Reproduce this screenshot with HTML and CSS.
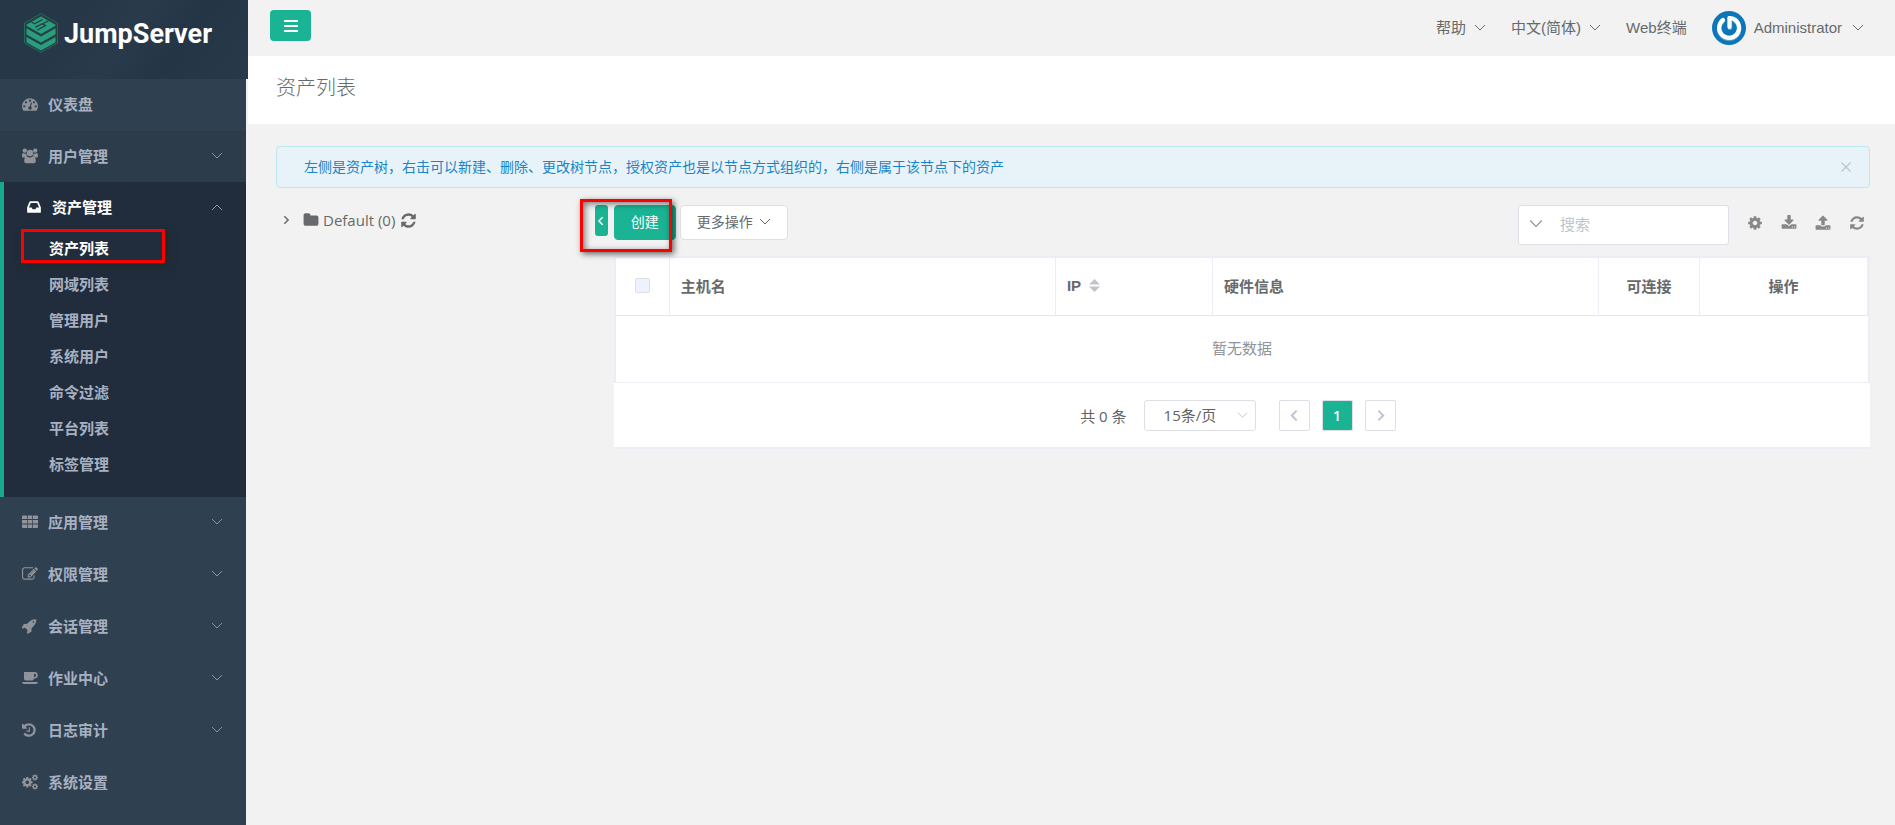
FILE: index.html
```html
<!DOCTYPE html>
<html lang="zh-CN">
<head>
<meta charset="utf-8">
<title>资产列表 - JumpServer</title>
<link rel="stylesheet" href="styles.css">
</head>
<body>
<svg class="sprite" aria-hidden="true">
  <symbol id="down" viewBox="0 0 12 12"><path d="M1 3l5 5 5-5" fill="none" stroke="currentColor"/></symbol>
  <symbol id="up" viewBox="0 0 12 12"><path d="M1 9l5-5 5 5" fill="none" stroke="currentColor"/></symbol>
  <symbol id="left" viewBox="0 0 12 12"><path d="M8 1.500L3.500 6 8 10.500" fill="none" stroke="currentColor" stroke-width="1.800"/></symbol>
  <symbol id="right" viewBox="0 0 12 12"><path d="M4 1.500L8.500 6 4 10.500" fill="none" stroke="currentColor" stroke-width="1.800"/></symbol>
  <symbol id="refresh" viewBox="0 0 1792 1792"><path d="M1639 1056q0 5-1 7-64 268-268 434.500t-478 166.500q-146 0-282.500-55t-243.500-157l-129 129q-19 19-45 19t-45-19-19-45v-448q0-26 19-45t45-19h448q26 0 45 19t19 45-19 45l-137 137q71 66 161 102t187 36q134 0 250-65t186-179q11-17 53-117 8-23 30-23h192q13 0 22.500 9.500t9.500 22.500zm25-800v448q0 26-19 45t-45 19h-448q-26 0-45-19t-19-45 19-45l138-138q-148-137-349-137-134 0-250 65t-186 179q-11 17-53 117-8 23-30 23h-199q-13 0-22.500-9.500t-9.500-22.500v-7q65-268 270-434.500t480-166.500q146 0 284 55.500t245 156.500l130-129q19-19 45-19t45 19 19 45z"/></symbol>
  <symbol id="cog" viewBox="0 0 1792 1792"><path d="M1152 896q0-106-75-181t-181-75-181 75-75 181 75 181 181 75 181-75 75-181zm512-109v222q0 12-8 23t-20 13l-185 28q-19 54-39 91 35 50 107 138 10 12 10 25t-9 23q-27 37-99 108t-94 71q-12 0-26-9l-138-108q-44 23-91 38-16 136-29 186-7 28-36 28h-222q-14 0-24.500-8.500t-11.500-21.500l-28-184q-49-16-90-37l-141 107q-10 9-25 9-14 0-25-11-126-114-165-168-7-10-7-23 0-12 8-23 15-21 51-66.500t54-70.500q-27-50-41-99l-183-27q-13-2-21-12.500t-8-23.500v-222q0-12 8-23t19-13l186-28q14-46 39-92-40-57-107-138-10-12-10-24 0-10 9-23 26-36 98.500-107.500t94.500-71.500q13 0 26 10l138 107q44-23 91-38 16-136 29-186 7-28 36-28h222q14 0 24.500 8.500t11.500 21.500l28 184q49 16 90 37l142-107q9-9 24-9 13 0 25 10 129 119 165 170 7 8 7 22 0 12-8 23-15 21-51 66.500t-54 70.500q26 50 41 98l183 28q13 2 21 12.500t8 23.500z"/></symbol>
  <symbol id="download" viewBox="0 0 1792 1792"><path d="M1344 1344q0-26-19-45t-45-19-45 19-19 45 19 45 45 19 45-19 19-45zm256 0q0-26-19-45t-45-19-45 19-19 45 19 45 45 19 45-19 19-45zm128-224v320q0 40-28 68t-68 28h-1472q-40 0-68-28t-28-68v-320q0-40 28-68t68-28h465l135 136q58 56 136 56t136-56l136-136h464q40 0 68 28t28 68zm-325-569q17 41-14 70l-448 448q-18 19-45 19t-45-19l-448-448q-31-29-14-70 17-39 59-39h256v-448q0-26 19-45t45-19h256q26 0 45 19t19 45v448h256q42 0 59 39z"/></symbol>
  <symbol id="upload" viewBox="0 0 1792 1792"><path d="M1344 1472q0-26-19-45t-45-19-45 19-19 45 19 45 45 19 45-19 19-45zm256 0q0-26-19-45t-45-19-45 19-19 45 19 45 45 19 45-19 19-45zm128-224v320q0 40-28 68t-68 28h-1472q-40 0-68-28t-28-68v-320q0-40 28-68t68-28h427q21 56 70.500 92t110.500 36h256q61 0 110.500-36t70.500-92h427q40 0 68 28t28 68zm-325-648q-17 40-59 40h-256v448q0 26-19 45t-45 19h-256q-26 0-45-19t-19-45v-448h-256q-42 0-59-40-17-39 14-69l448-448q18-19 45-19t45 19l448 448q31 30 14 69z"/></symbol>
  <symbol id="history" viewBox="128 0 1792 1792"><path d="M1664 896q0 156-61 298t-164 245-245 164-298 61q-172 0-327-72.500t-264-204.500q-7-10-6.500-22.500t8.500-20.500l137-138q10-9 25-9 16 2 23 12 73 95 179 147t225 52q104 0 198.500-40.500t163.500-109.500 109.500-163.500 40.500-198.500-40.500-198.500-109.500-163.500-163.500-109.500-198.500-40.500q-98 0-188 35.500t-160 101.500l137 138q31 30 14 69-17 40-59 40h-448q-26 0-45-19t-19-45v-448q0-42 40-59 39-17 69 14l130 129q107-101 244.500-156.500t284.500-55.500q156 0 298 61t245 164 164 245 61 298zm-640-288v448q0 14-9 23t-23 9h-320q-14 0-23-9t-9-23v-64q0-14 9-23t23-9h224v-352q0-14 9-23t23-9h64q14 0 23 9t9 23z"/></symbol>
  <symbol id="edit" viewBox="0 0 1792 1792"><path d="M888 1184l116-116-152-152-116 116v56h96v96h56zm440-720q-16-16-33 1l-350 350q-17 17-1 33t33-1l350-350q17-17 1-33zm80 594v190q0 119-84.500 203.500t-203.500 84.500h-832q-119 0-203.500-84.500t-84.500-203.500v-832q0-119 84.500-203.500t203.500-84.500h832q63 0 117 25 15 7 18 23 3 17-9 29l-49 49q-14 14-32 8-23-6-45-6h-832q-66 0-113 47t-47 113v832q0 66 47 113t113 47h832q66 0 113-47t47-113v-126q0-13 9-22l64-64q15-15 35-7t20 29zm-96-738l288 288-672 672h-288v-288zm444 132l-92 92-288-288 92-92q28-28 68-28t68 28l152 152q28 28 28 68t-28 68z"/></symbol>
  <symbol id="rocket" viewBox="64 0 1792 1792"><path d="M1440 448q0-40-28-68t-68-28-68 28-28 68 28 68 68 28 68-28 28-68zm224-288q0 249-75.500 430.500t-253.500 360.500q-81 80-195 176l-20 379q-2 16-16 26l-384 224q-7 4-16 4-12 0-23-9l-64-64q-13-14-8-32l85-276-281-281-276 85q-3 1-9 1-14 0-23-9l-64-64q-17-19-5-39l224-384q10-14 26-16l379-20q96-114 176-195 188-187 358-258t431-71q14 0 24 9.500t10 22.500z"/></symbol>
  <symbol id="folder" viewBox="0 0 1792 1792"><path d="M1728 608v704q0 92-66 158t-158 66h-1216q-92 0-158-66t-66-158v-960q0-92 66-158t158-66h320q92 0 158 66t66 158v32h672q92 0 158 66t66 158z"/></symbol>
  <symbol id="inbox" viewBox="0 0 1792 1792"><path d="M1151 960h316q-1-3-2.500-8t-2.500-8l-212-496h-708l-212 496q-1 2-2.500 8t-2.500 8h316l95 192h320zm513 30v482q0 26-19 45t-45 19h-1408q-26 0-45-19t-19-45v-482q0-62 25-123l238-552q10-25 36.500-42t52.500-17h832q26 0 52.500 17t36.500 42l238 552q25 61 25 123z"/></symbol>
  <symbol id="gauge" viewBox="0 0 1792 1792"><path d="M384 1152q0-53-37.500-90.500t-90.500-37.500-90.500 37.500-37.500 90.500 37.500 90.500 90.500 37.500 90.500-37.500 37.500-90.500zm192-448q0-53-37.500-90.500t-90.500-37.500-90.500 37.500-37.500 90.500 37.500 90.500 90.500 37.500 90.500-37.500 37.500-90.500zm428 481l101-382q6-26-7.500-48.500t-38.500-29.500-48 6.500-30 39.500l-101 382q-60 5-107 43.500t-63 98.500q-20 77 20 146t117 89 146-20 89-117q16-60-6-117t-72-91zm660-33q0-53-37.500-90.500t-90.500-37.500-90.500 37.500-37.500 90.500 37.500 90.500 90.500 37.500 90.500-37.500 37.500-90.500zm-640-640q0-53-37.500-90.500t-90.500-37.500-90.500 37.500-37.500 90.500 37.500 90.500 90.500 37.500 90.500-37.500 37.500-90.500zm448 192q0-53-37.500-90.500t-90.500-37.500-90.500 37.500-37.500 90.500 37.500 90.500 90.500 37.500 90.500-37.500 37.500-90.500zm320 448q0 261-141 483-19 29-54 29h-1402q-35 0-54-29-141-221-141-483 0-182 71-348t191-286 286-191 348-71 348 71 286 191 191 286 71 348z"/></symbol>
  <symbol id="users" viewBox="0 0 16 16"><circle cx="2.800" cy="2.600" r="2.200"/><circle cx="13.200" cy="2.600" r="2.200"/><circle cx="8" cy="5" r="3.200"/><path d="M0 8c0-1.800.4-3 1.300-3 .8.700 2 .8 3.200.5C4.400 7 4.800 8 5.500 8.500 4.500 8.600 3.800 9 3.200 9.500H1.500C.5 9.500 0 9 0 8zM16 8c0-1.800-.4-3-1.300-3-.8.700-2 .8-3.200.5.100 1.500-.3 2.500-1 3 1 .1 1.700.5 2.300 1h1.700c1 0 1.500-.5 1.500-1.500zM2.200 13c0-2.500.8-4.500 2.900-4.500 1.700 1.200 4.100 1.200 5.800 0 2.100 0 2.900 2 2.900 4.500 0 1.300-.8 2.200-2 2.200H4.200c-1.200 0-2-.9-2-2.200z"/></symbol>
  <symbol id="grid" viewBox="0 0 16 16"><path d="M1 1.500h3a1 1 0 011 1V5H0V2.500a1 1 0 011-1zM5.700 1.500h4.600V5H5.700zM11 1.500h4a1 1 0 011 1V5h-5zM0 6h5v3.500H0zM5.700 6h4.600v3.500H5.700zM11 6h5v3.500h-5zM0 10.500h5V14H1a1 1 0 01-1-1zM5.700 10.500h4.600V14H5.700zM11 10.500h5V13a1 1 0 01-1 1h-4z"/></symbol>
  <symbol id="coffee" viewBox="0 0 16 16"><path fill-rule="evenodd" d="M2 2h10.500a3.300 3.300 0 010 6.600H12a2 2 0 01-2 2H4a2 2 0 01-2-2zm10 1.700v3.200h.5a1.600 1.600 0 000-3.200zM0 12h16c0 1.200-1 2-2.200 2H2.200C1 14 0 13.200 0 12z"/></symbol>
  <symbol id="cogs" viewBox="0 0 16 16"><use href="#cog" x="-1" y="2" width="12.500" height="12.500"/><use href="#cog" x="9.500" y="0" width="7" height="7"/><use href="#cog" x="9.500" y="9" width="7" height="7"/></symbol>
</svg>

<div class="app">
  <aside class="sidebar">
    <a class="brand" href="#">
      <svg class="brand-mark" viewBox="0 0 36 42" aria-hidden="true">
        <path d="M18 1.500L34.500 11v20L18 40.500 1.500 31V11z" fill="#24403f" stroke="#22695f"/>
        <path d="M18 4.500l14.500 8.300v.9L18 22 3.500 13.700v-.9z" fill="#2a9d80"/>
        <path d="M8.500 10l3 1.800L19.500 7.500M14 18.200l8.500-4.800-3.200-1.700-7 3.600M25.500 8.700L18.500 12.500" stroke="#24403f" stroke-width="1.300" fill="none"/>
        <path d="M3.500 16.200L18 24.500l14.500-8.300v5.300c0 .8-.3 1.200-1 1.600L18 30.500 4.500 23.100c-.7-.4-1-.8-1-1.600z" fill="#2a9d80"/>
        <path d="M3.500 25L18 33l14.500-8v4.500c0 .8-.3 1.200-1 1.600L18 38.500 4.500 31.100c-.7-.4-1-.8-1-1.600z" fill="#2a9d80"/>
      </svg>
      <span class="brand-name">JumpServer</span>
    </a>
    <nav>
      <a class="item" href="#"><svg class="ico"><use href="#gauge"/></svg>仪表盘</a>
      <a class="item item-shade" href="#"><svg class="ico"><use href="#users"/></svg>用户管理<svg class="caret"><use href="#down"/></svg></a>
      <div class="group">
        <a class="item item-open" href="#"><svg class="ico"><use href="#inbox"/></svg>资产管理<svg class="caret"><use href="#up"/></svg></a>
        <a class="sub sub-current" href="#">资产列表<span class="mark mark-menu"></span></a>
        <a class="sub" href="#">网域列表</a>
        <a class="sub" href="#">管理用户</a>
        <a class="sub" href="#">系统用户</a>
        <a class="sub" href="#">命令过滤</a>
        <a class="sub" href="#">平台列表</a>
        <a class="sub" href="#">标签管理</a>
      </div>
      <a class="item" href="#"><svg class="ico"><use href="#grid"/></svg>应用管理<svg class="caret"><use href="#down"/></svg></a>
      <a class="item" href="#"><svg class="ico"><use href="#edit"/></svg>权限管理<svg class="caret"><use href="#down"/></svg></a>
      <a class="item" href="#"><svg class="ico"><use href="#rocket"/></svg>会话管理<svg class="caret"><use href="#down"/></svg></a>
      <a class="item" href="#"><svg class="ico"><use href="#coffee"/></svg>作业中心<svg class="caret"><use href="#down"/></svg></a>
      <a class="item" href="#"><svg class="ico"><use href="#history"/></svg>日志审计<svg class="caret"><use href="#down"/></svg></a>
      <a class="item" href="#"><svg class="ico"><use href="#cogs"/></svg>系统设置</a>
    </nav>
  </aside>

  <main class="main">
    <header class="topbar">
      <button class="burger" type="button" aria-label="菜单"><svg viewBox="0 0 14 12"><path d="M0 1h14M0 6h14M0 11h14" stroke="#fff" stroke-width="2"/></svg></button>
      <div class="topnav">
        <button class="toplink" type="button">帮助<svg class="caret-s"><use href="#down"/></svg></button>
        <button class="toplink" type="button">中文(简体)<svg class="caret-s"><use href="#down"/></svg></button>
        <a class="toplink" href="#">Web终端</a>
        <button class="toplink toplink-user" type="button">
          <svg class="avatar" viewBox="0 0 34 34" aria-hidden="true"><circle cx="17" cy="17" r="17" fill="#0d76bb"/><path d="M11 10a10 10 0 1012-.2M18 8v9" fill="none" stroke="#9cc" stroke-width="4.500" stroke-linecap="round" opacity=".5"/><path d="M11 9a10 10 0 1012-.2" fill="none" stroke="#fff" stroke-width="4.200" stroke-linecap="round"/><path d="M17.500 7v9" fill="none" stroke="#fff" stroke-width="4.200" stroke-linecap="round"/><path d="M17.500 7c3 0 4.500 1 5.500 1.800" fill="none" stroke="#fff" stroke-width="4" stroke-linecap="round"/></svg>
          Administrator<svg class="caret-s"><use href="#down"/></svg>
        </button>
      </div>
    </header>
    <div class="heading"><h1>资产列表</h1></div>
    <div class="content">
      <div class="alert" role="status">
        <span>左侧是资产树，右击可以新建、删除、更改树节点，授权资产也是以节点方式组织的，右侧是属于该节点下的资产</span>
        <button class="alert-close" type="button" aria-label="关闭"><svg viewBox="0 0 10 10"><path d="M.5.500l9 9M9.500.500l-9 9" stroke="currentColor" stroke-width="1.300"/></svg></button>
      </div>
      <div class="split">
        <div class="tree">
          <svg class="tree-arrow"><use href="#right"/></svg>
          <svg class="tree-folder"><use href="#folder"/></svg>
          <span>Default (0)</span>
          <svg class="tree-refresh"><use href="#refresh"/></svg>
        </div>
        <button class="fold" type="button" aria-label="收起"><svg><use href="#left"/></svg></button>
        <section class="assets">
          <div class="toolbar">
            <button class="btn btn-primary" type="button">创建</button>
            <button class="btn" type="button">更多操作<svg class="caret-s"><use href="#down"/></svg></button>
            <label class="search"><svg><use href="#down"/></svg><input type="search" placeholder="搜索" aria-label="搜索"></label>
            <div class="tools">
              <button type="button" aria-label="设置"><svg><use href="#cog"/></svg></button>
              <button type="button" aria-label="导出"><svg><use href="#download"/></svg></button>
              <button type="button" aria-label="导入"><svg><use href="#upload"/></svg></button>
              <button type="button" aria-label="刷新"><svg><use href="#refresh"/></svg></button>
            </div>
            <span class="mark mark-create"></span>
          </div>
          <div class="card">
            <table class="grid">
              <colgroup><col class="c-check"><col><col class="c-ip"><col><col class="c-conn"><col class="c-act"></colgroup>
              <thead><tr>
                <th class="center"><input class="check" type="checkbox" disabled aria-label="全选"></th>
                <th>主机名</th>
                <th><span class="sortable">IP<svg viewBox="0 0 12 14"><path d="M6 0l6 6H0zM6 14L0 8h12z" fill="#c0c4cc"/></svg></span></th>
                <th>硬件信息</th>
                <th class="center">可连接</th>
                <th class="center">操作</th>
              </tr></thead>
              <tbody><tr><td colspan="6">暂无数据</td></tr></tbody>
            </table>
            <div class="pager">
              <span>共 0 条</span>
              <div class="size"><select aria-label="每页条数"><option>15条/页</option></select><svg><use href="#down"/></svg></div>
              <div class="pages">
                <button type="button" disabled aria-label="上一页"><svg><use href="#left"/></svg></button>
                <button class="current" type="button">1</button>
                <button type="button" disabled aria-label="下一页"><svg><use href="#right"/></svg></button>
              </div>
            </div>
          </div>
        </section>
      </div>
    </div>
  </main>
</div>
</body>
</html>
```
FILE: styles.css
```css
* { box-sizing: border-box; }
body {
  margin: 0;
  background: #f2f2f2;
  color: #676a6c;
  font: 15px/20px "Open Sans", "Noto Sans CJK SC", sans-serif;
}
svg { display: block; flex: none; fill: currentColor; }
button, input, select { font: inherit; color: inherit; }
button { cursor: pointer; }
a { color: inherit; text-decoration: none; }
.sprite { position: absolute; width: 0; height: 0; }

.app { display: flex; min-height: 100vh; }

/* sidebar */
.sidebar {
  width: 246px;
  flex: none;
  margin-right: 2px;
  background: #2f4050;
  color: #a7b1c2;
  font-weight: 600;
}
.brand {
  display: flex;
  align-items: flex-start;
  gap: 5px;
  width: 248px;
  height: 79px;
  padding: 12px 0 0 23px;
  background: linear-gradient(125deg, #263848 0 30%, #293b4b 50%, #243545 70%, #283949);
}
.brand-mark { width: 36px; height: 42px; }
.brand-name { color: #fff; font: 700 27px/44px Roboto, sans-serif; }
.item {
  display: flex;
  align-items: center;
  height: 52px;
  padding: 0 23px 2px 22px;
}
.ico { width: 16px; height: 16px; margin-right: 10px; color: #909399; }
.caret { width: 12px; height: 12px; margin-left: auto; color: #909399; }
.item-shade { height: 51px; background: #2c3c4b; }
.group {
  padding-bottom: 15px;
  background: #212d3d;
  border-left: 4px solid #19aa8d;
}
.item-open { height: 48px; padding-top: 4px; color: #fff; }
.item-open .ico { color: #fff; }
.sub {
  display: block;
  position: relative;
  padding-left: 45px;
  line-height: 36px;
}
.sub-current { color: #fff; }

.mark { position: absolute; border: 3px solid #f00; pointer-events: none; }
.mark-menu { left: 17px; top: -1px; width: 144px; height: 34px; box-shadow: 3px 3px 8px rgba(30, 35, 30, .6); }
.mark-create {
  left: -34px;
  top: -6px;
  width: 92px;
  height: 53px;
  box-shadow: 2px 2px 6px rgba(0, 0, 0, .6), inset 2px 2px 6px rgba(0, 0, 0, .5);
}

/* top bar */
.main { flex: 1; min-width: 0; }
.topbar {
  display: flex;
  justify-content: space-between;
  height: 56px;
  padding: 0 31px 0 22px;
}
.burger {
  display: flex;
  align-items: center;
  justify-content: center;
  width: 41px;
  height: 31px;
  margin-top: 10px;
  padding: 0;
  background: #1ab394;
  border: 0;
  border-radius: 4px;
}
.burger svg { width: 14px; height: 12px; }
.topnav { display: flex; align-items: center; gap: 25px; font-family: "Liberation Sans", "Noto Sans CJK SC", sans-serif; }
.toplink {
  display: flex;
  align-items: center;
  gap: 8px;
  padding: 0;
  background: none;
  border: 0;
}
.caret-s { width: 12px; height: 12px; }
.toplink-user .caret-s { margin-left: 2px; }
.avatar { width: 34px; height: 34px; }

.heading { padding: 18px 28px 22px; background: #fff; }
.heading h1 { margin: 0; font-size: 20px; line-height: 28px; font-weight: 300; }

/* content */
.content { padding: 22px 25px 22px 28px; }
.alert {
  display: flex;
  align-items: center;
  justify-content: space-between;
  height: 42px;
  padding: 0 18px 0 27px;
  background: #e7f3f9;
  border: 1px solid #bce8f1;
  border-radius: 4px;
  color: #1c84c6;
  font-size: 14px;
}
.alert-close { padding: 0; border: 0; background: none; color: #c0c4cc; }
.alert-close svg { width: 10px; height: 10px; }
.split { display: flex; align-items: flex-start; margin-top: 17px; }
.tree {
  display: flex;
  align-items: center;
  width: 20%;
  padding: 5px 0 0 4px;
}
.tree-arrow { width: 12px; height: 10px; margin-right: 11px; }
.tree-folder { width: 16px; height: 16px; margin-right: 4px; }
.tree-refresh { width: 17px; height: 17px; margin-left: 5px; }
.fold {
  display: flex;
  align-items: center;
  justify-content: center;
  width: 13px;
  height: 31px;
  margin-right: 6px;
  padding: 0;
  background: #1ab394;
  border: 0;
  border-radius: 3px;
  color: #fff;
}
.fold svg { width: 10px; height: 10px; }
.assets { flex: 1; min-width: 0; }

.toolbar { display: flex; align-items: flex-start; position: relative; height: 51px; gap: 4px; }
.btn {
  display: flex;
  align-items: center;
  gap: 6px;
  height: 35px;
  padding: 0 16px 2px;
  background: #fff;
  border: 1px solid #dcdfe6;
  border-radius: 4px;
  font-size: 14px;
}
.btn-primary { background: #1ab394; border-color: #1ab394; color: #fff; }
.search {
  display: flex;
  align-items: center;
  width: 211px;
  height: 40px;
  margin-left: auto;
  padding: 0 0 2px 10px;
  background: #fff;
  border: 1px solid #dcdfe6;
  border-radius: 3px;
}
.search svg { width: 14px; height: 14px; margin-right: 17px; color: #909399; }
.search input { flex: 1; min-width: 0; padding: 0; border: 0; outline: 0; background: none; }
.search input::placeholder { color: #c0c4cc; }
.tools { display: flex; gap: 18px; margin: 10px 5px 0 14px; }
.tools button { padding: 0; border: 0; background: none; color: #888; }
.tools svg { width: 16px; height: 16px; }

.card { background: #fff; border: solid #ebeef5; border-width: 2px 0; }
.grid {
  width: 100%;
  table-layout: fixed;
  border-collapse: separate;
  border-spacing: 0;
  border: solid #ebeef5;
  border-width: 0 2px;
}
.c-check { width: 54px; }
.c-ip { width: 157px; }
.c-conn { width: 101px; }
.c-act { width: 168px; }
.grid th {
  height: 58px;
  padding: 0 11px 2px;
  border-right: 1px solid #ebeef5;
  border-bottom: 1px solid #e4e7ed;
  text-align: left;
  font-weight: 600;
}
.grid .center { text-align: center; }
.grid td {
  height: 67px;
  padding: 0 0 2px;
  border-bottom: 1px solid #ebeef5;
  text-align: center;
  color: #909399;
}
.check {
  appearance: none;
  display: block;
  width: 15px;
  height: 15px;
  margin: 0 auto;
  background: #edf2fc;
  border: 1px solid #dcdfe6;
  border-radius: 2px;
}
.sortable { display: flex; align-items: center; gap: 8px; font-family: "Liberation Sans", sans-serif; }
.sortable svg { width: 11px; height: 13px; }

.pager {
  display: flex;
  align-items: center;
  justify-content: center;
  padding: 17px 8px 16px 0;
  color: #606266;
}
.size { position: relative; margin: 0 23px 0 17px; }
.size select {
  appearance: none;
  width: 112px;
  height: 31px;
  padding: 0 30px 2px 19px;
  background: #fff;
  border: 1px solid #dcdfe6;
  border-radius: 3px;
}
.size svg { position: absolute; right: 8px; top: 10px; width: 11px; height: 11px; color: #c0c4cc; pointer-events: none; }
.pages { display: flex; gap: 12px; }
.pages button {
  display: flex;
  align-items: center;
  justify-content: center;
  width: 31px;
  height: 31px;
  padding: 0;
  background: #fff;
  border: 1px solid #dcdfe6;
  border-radius: 2px;
  color: #c0c4cc;
}
.pages svg { width: 13px; height: 13px; }
.pages .current { background: #1ab394; color: #fff; font-size: 14px; font-weight: 600; }
```
